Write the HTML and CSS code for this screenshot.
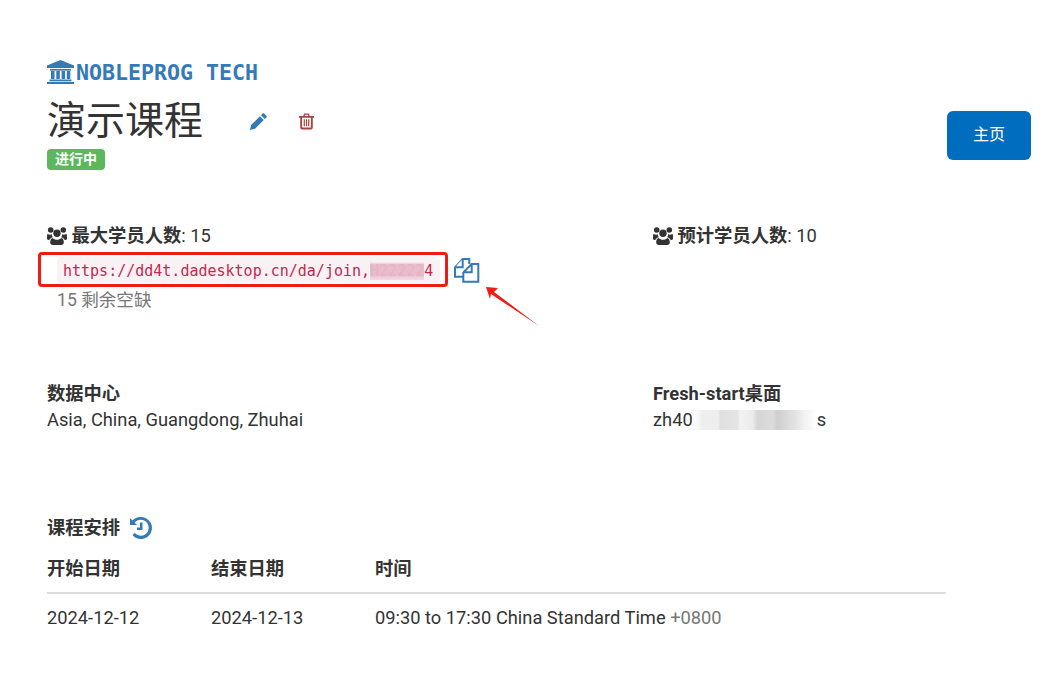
FILE: index.html
```html
<!DOCTYPE html>
<html lang="zh-CN">
<head>
  <meta charset="UTF-8">
  <title>演示课程</title>
  <link rel="stylesheet" href="styles.css">
</head>
<body>
  <div class="page">
    <!-- Header -->
    <div class="header">
      <div class="header-main">
        <div class="brand">
          <svg class="brand-icon" viewBox="0 0 27 24"><path d="M13.5 0 27 5.500V8H0V5.500z"/><rect x="3" y="9" width="21" height="1.600"/><rect x="4" y="11" width="3.500" height="8"/><rect x="9.300" y="11" width="3.500" height="8"/><rect x="14.600" y="11" width="3.500" height="8"/><rect x="19.800" y="11" width="3.500" height="8"/><rect x="2.500" y="19.500" width="22" height="1.800"/><rect x="0" y="22" width="27" height="2"/></svg>
          <span class="brand-name">NOBLEPROG TECH</span>
        </div>
        <div class="title-row">
          <h1>演示课程</h1>
          <svg class="edit-icon" viewBox="0 0 18 18"><path d="M13.300.6c.5-.5 1.200-.5 1.700 0l2.400 2.400c.5.500.5 1.200 0 1.700l-1.700 1.700-4.100-4.100zM10.500 3.400l4.100 4.100-9.300 9.300L0 18l1.200-5.300z"/></svg>
          <svg class="delete-icon" viewBox="0 0 16 17"><path fill-rule="evenodd" d="M5.500 0h5l1 2.500H16v1.900h-1.300V15c0 1.100-.8 2-1.800 2H3.100c-1 0-1.800-.9-1.800-2V4.400H0V2.500h4.500zM6.500 1.400l-.4 1.100h3.800l-.4-1.100zM3.300 4.400V15h9.400V4.400zM5 6h1.300v7.500H5zM7.350 6h1.300v7.500h-1.300zM9.700 6H11v7.500H9.700z"/></svg>
        </div>
        <span class="badge">进行中</span>
      </div>
      <a class="home-btn">主页</a>
    </div>

    <!-- Seats -->
    <div class="info-grid seats">
      <div>
        <div class="info-line">
          <svg class="users-icon" viewBox="0 0 20 18"><circle cx="10" cy="6.300" r="3.700"/><circle cx="3.700" cy="3" r="2.800"/><circle cx="16.300" cy="3" r="2.800"/><path d="M5.600 11c1 1.200 2.700 1.800 4.400 1.800s3.400-.6 4.400-1.800c1.700.3 2.400 2.300 2.400 4.300 0 1.700-1.100 2.700-2.600 2.700H5.800c-1.500 0-2.600-1-2.600-2.700 0-2 .7-4 2.400-4.300zM.6 6.800c1 .9 3 1.200 4.300.5-.2 1.200.2 2.200 1 3-1.700.3-3 1.300-3.600 2.700H1.500C.5 13 0 12.400 0 11.300c0-1.800 0-3.500.6-4.500zM19.400 6.800c.6 1 .6 2.700.6 4.500 0 1.100-.5 1.700-1.500 1.700h-.8c-.6-1.400-1.900-2.400-3.600-2.700.8-.8 1.200-1.800 1-3 1.300.7 3.300.4 4.300-.5z"/></svg>
          <b>最大学员人数</b>: 15
        </div>
        <div class="join-row">
          <code class="join-link">https://dd4t.dadesktop.cn/da/join,<span class="smudge">H22222</span>4</code>
          <svg class="copy-icon" viewBox="0 0 27 26"><path d="M16.300 7V2H9.700L2 10.300v9.400h8.300"/><path d="M9.700 2v8.300H2"/><path d="M18.700 7h6.600v17.700h-15v-9.400zM18.700 7v8.300h-8.400"/></svg>
        </div>
        <div class="seats-left">15 剩余空缺</div>
      </div>
      <div>
        <div class="info-line">
          <svg class="users-icon" viewBox="0 0 20 18"><circle cx="10" cy="6.300" r="3.700"/><circle cx="3.700" cy="3" r="2.800"/><circle cx="16.300" cy="3" r="2.800"/><path d="M5.600 11c1 1.200 2.700 1.800 4.400 1.800s3.400-.6 4.400-1.800c1.700.3 2.400 2.300 2.400 4.300 0 1.700-1.100 2.700-2.600 2.700H5.800c-1.500 0-2.600-1-2.600-2.700 0-2 .7-4 2.400-4.300zM.6 6.800c1 .9 3 1.200 4.300.5-.2 1.200.2 2.200 1 3-1.700.3-3 1.300-3.600 2.700H1.500C.5 13 0 12.400 0 11.300c0-1.800 0-3.500.6-4.500zM19.400 6.800c.6 1 .6 2.700.6 4.500 0 1.100-.5 1.700-1.500 1.700h-.8c-.6-1.400-1.900-2.400-3.600-2.700.8-.8 1.200-1.800 1-3 1.300.7 3.300.4 4.300-.5z"/></svg>
          <b>预计学员人数</b>: 10
        </div>
      </div>
    </div>

    <!-- Location -->
    <div class="info-grid location">
      <div>
        <b>数据中心</b><br>
        Asia, China, Guangdong, Zhuhai
      </div>
      <div>
        <b>Fresh-start桌面</b><br>
        zh40<span class="mosaic"></span>s
      </div>
    </div>

    <!-- Schedule -->
    <div class="schedule">
      <div class="schedule-title">
        <b>课程安排</b>
        <svg class="history-icon" viewBox="0 0 22 22"><path d="M11 0a11 11 0 1 1-8.600 17.900l2.400-1.900A8 8 0 1 0 4.600 5.600L7 8H0V1l2.500 2.500A11 11 0 0 1 11 0zM10 5.500h2.500V13H7v-2.500h3z"/></svg>
      </div>
      <table>
        <thead>
          <tr><th>开始日期</th><th>结束日期</th><th>时间</th></tr>
        </thead>
        <tbody>
          <tr><td>2024-12-12</td><td>2024-12-13</td><td>09:30 to 17:30 China Standard Time <span class="muted">+0800</span></td></tr>
        </tbody>
      </table>
    </div>
  </div>

  <!-- Screenshot annotation -->
  <div class="mark-box"></div>
  <svg class="mark-arrow" viewBox="0 0 60 46"><polygon points="1,1 13,2 9,6 54,40 6,8 5,13"/></svg>
</body>
</html>
```

FILE: styles.css
```css
* {
  box-sizing: border-box;
}

body {
  margin: 0;
  background: #fff;
  color: #333;
  font-family: Roboto, "Noto Sans CJK SC", sans-serif;
  font-size: 18.300px;
  line-height: 26px;
}

.page {
  padding: 57px 30px 0 47px;
}

.header {
  display: flex;
  justify-content: space-between;
  align-items: flex-start;
}

.brand {
  display: flex;
  align-items: center;
  gap: 2px;
  height: 30px;
  color: #337ab7;
  font-family: "DejaVu Sans Mono", monospace;
  font-size: 21.600px;
  font-weight: bold;
}

.brand-name {
  padding-top: 2px;
}

.brand-icon {
  width: 27px;
  height: 24px;
  fill: #337ab7;
}

.title-row {
  display: flex;
  align-items: center;
  height: 58px;
  padding-top: 10px;
}

h1 {
  margin: 0;
  width: 203px;
  font-size: 39px;
  font-weight: 400;
  line-height: 50px;
}

.edit-icon {
  width: 17px;
  height: 17px;
  fill: #337ab7;
}

.delete-icon {
  width: 15px;
  height: 17px;
  margin-left: 32px;
  fill: #a94442;
}

.badge {
  display: block;
  width: 58px;
  height: 21px;
  margin-top: 4px;
  border-radius: 4px;
  background: #5cb85c;
  color: #fff;
  font-size: 14px;
  font-weight: bold;
  line-height: 21px;
  text-align: center;
}

.home-btn {
  display: block;
  width: 84px;
  height: 49px;
  margin-top: 54px;
  border-radius: 6px;
  background: #006dbf;
  color: #fff;
  font-size: 16px;
  line-height: 47px;
  text-align: center;
}

.info-grid {
  display: grid;
  grid-template-columns: 606px 1fr;
}

.seats {
  margin-top: 53px;
  height: 158px;
}

.info-line {
  height: 25px;
  line-height: 25px;
}

.users-icon {
  width: 20px;
  height: 18px;
  vertical-align: -3px;
  fill: #333;
}

.join-row {
  display: flex;
  align-items: center;
  gap: 13px;
  margin-top: 9px;
  padding-left: 10px;
}

.join-link {
  display: block;
  width: 383px;
  height: 26px;
  padding: 1px 6px 0;
  border-radius: 4px;
  background: #f9f2f4;
  color: #c7254e;
  font-family: "DejaVu Sans Mono", monospace;
  font-size: 15px;
  line-height: 26px;
  white-space: nowrap;
}

.smudge {
  background: linear-gradient(180deg, #f9f2f4 0, #e9bccb 15%, #e9bccb 70%, #f4dde4 100%);
  color: #e3b4c4;
}

.copy-icon {
  width: 27px;
  height: 26px;
  fill: #fff;
  stroke: #337ab7;
  stroke-width: 2;
}

.seats-left {
  margin-top: 4px;
  padding-left: 10px;
  color: #777;
  font-size: 17.600px;
}

.location {
  height: 133px;
}

.mosaic {
  display: inline-block;
  width: 124px;
  height: 20px;
  vertical-align: -4px;
  background: linear-gradient(90deg, #fff 0, #eee 8%, #eee 20%, #e0e0e0 22%, #e4e4e4 36%, #f2f2f2 38%, #ececec 48%, #d6d6d6 52%, #dcdcdc 64%, #cfcfcf 68%, #e2e2e2 82%, #f2f2f2 90%, #fff 100%);
}

.schedule-title {
  display: flex;
  align-items: center;
  gap: 10px;
  height: 28px;
}

.history-icon {
  width: 22px;
  height: 22px;
  fill: #337ab7;
}

table {
  width: 899px;
  margin-top: 14px;
  border-collapse: collapse;
  table-layout: fixed;
}

th,
td {
  padding: 0;
  text-align: left;
}

th:nth-child(1),
th:nth-child(2) {
  width: 164px;
}

th {
  height: 37px;
  border-bottom: 2px solid #ddd;
  vertical-align: top;
}

td {
  height: 48px;
}

.muted {
  color: #777;
}

.mark-box {
  position: absolute;
  left: 38px;
  top: 252px;
  width: 410px;
  height: 35px;
  border: 3px solid #f01c14;
  border-radius: 4px;
}

.mark-arrow {
  position: absolute;
  left: 485px;
  top: 286px;
  width: 60px;
  height: 46px;
  fill: #f01c14;
}
```
